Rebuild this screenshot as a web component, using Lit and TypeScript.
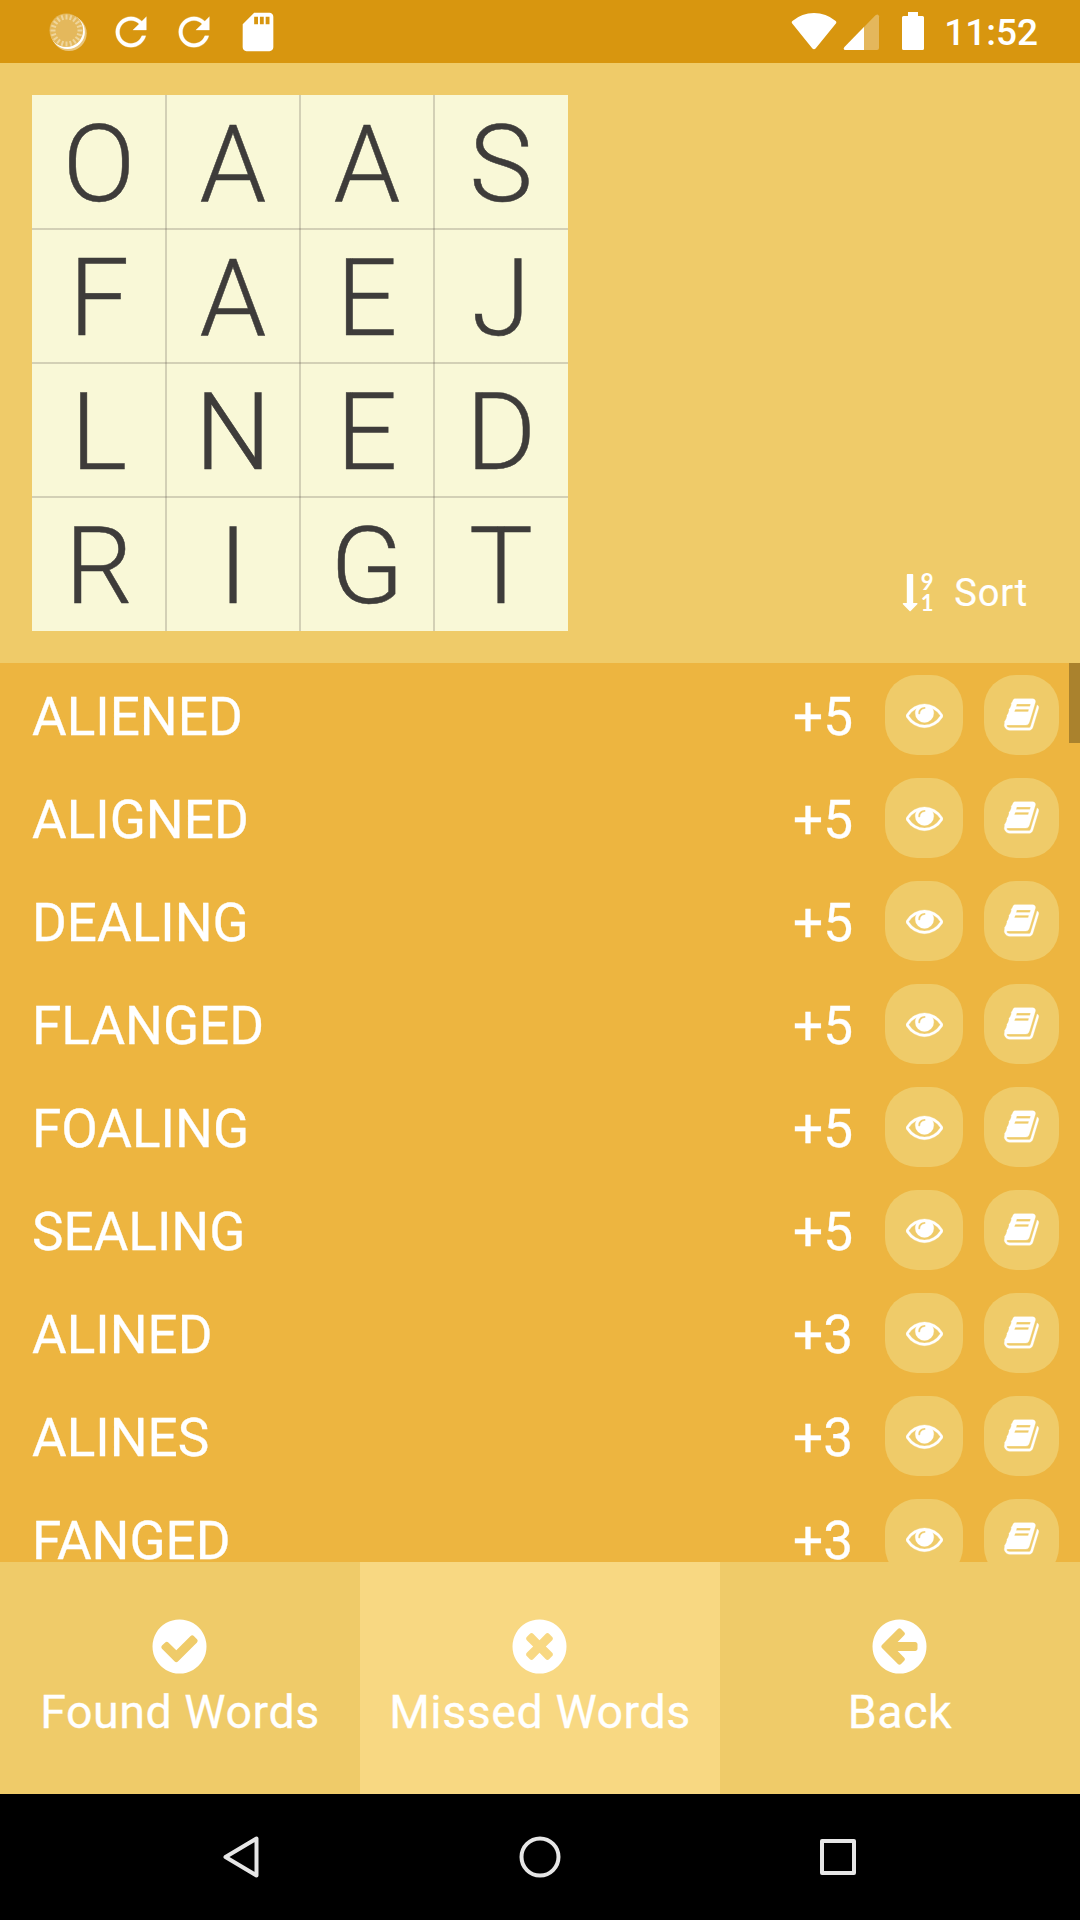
import { LitElement, html, svg, css } from "lit";
import { customElement, property } from "lit/decorators.js";

const LETTERS = "OAASFAEJLNEDRIGT".split("");

const WORDS: Array<[string, number]> = [
  ["ALIENED", 5],
  ["ALIGNED", 5],
  ["DEALING", 5],
  ["FLANGED", 5],
  ["FOALING", 5],
  ["SEALING", 5],
  ["ALINED", 3],
  ["ALINES", 3],
  ["FANGED", 3],
];

const DISC =
  "q0 209-103 385.5t-279.5 279.5-385.5 103-385.5-103-279.5-279.5-103-385.5 103-385.5 279.5-279.5 385.5-103 385.5 103 279.5 279.5 103 385.5z";

const GLYPHS: Record<string, string> = {
  check:
    "M1412 734q0-28-18-46l-91-90q-19-19-45-19t-45 19l-408 407-226-226q-19-19-45-19t-45 19l-91 90q-18 18-18 46 0 27 18 45l362 362q19 19 45 19 27 0 46-19l543-543q18-18 18-45zm252 162" + DISC,
  cross:
    "M1277 1122q0-26-19-45l-181-181 181-181q19-19 19-45 0-27-19-46l-90-90q-19-19-46-19-26 0-45 19l-181 181-181-181q-19-19-45-19-27 0-46 19l-90 90q-19 19-19 46 0 26 19 45l181 181-181 181q-19 19-19 45 0 27 19 46l90 90q19 19 46 19 26 0 45-19l181-181 181 181q19 19 45 19 27 0 46-19l90-90q19-19 19-46zm387-226" + DISC,
  back:
    "M1408 960v-128q0-26-19-45t-45-19h-502l189-189q19-19 19-45t-19-45l-91-91q-18-18-45-18t-45 18l-362 362-91 91q-18 18-18 45t18 45l91 91 362 362q18 18 45 18t45-18l91-91q18-18 18-45t-18-45l-189-189h502q26 0 45-19t19-45zm256-64" + DISC,
  eye:
    "M1664 960q-152-236-381-353 61 104 61 225 0 185-131.5 316.5t-316.5 131.5-316.5-131.5-131.5-316.5q0-121 61-225-229 117-381 353 133 205 333.5 326.5t434.5 121.5 434.5-121.5 333.5-326.5zm-720-384q0-20-14-34t-34-14q-125 0-214.5 89.5t-89.5 214.5q0 20 14 34t34 14 34-14 14-34q0-86 61-147t147-61q20 0 34-14t14-34zm848 384q0 34-20 69-140 230-376.5 368.5t-499.5 138.5-499.5-139-376.5-368q-20-35-20-69t20-69q140-229 376.5-368t499.5-139 499.5 139 376.5 368q20 35 20 69z",
  book:
    "M1703 478q40 57 18 129l-275 906q-19 64-76.5 107.5t-122.5 43.5h-923q-77 0-148.5-53.5t-99.5-131.5q-24-67-2-127 0-4 3-27t4-37q1-8-3-21.5t-3-19.5q2-11 8-21t16.5-23.5 16.5-23.5q23-38 45-91.5t30-91.5q3-10 .5-30t-.5-28q3-11 17-28t17-23q21-36 42-92t25-90q1-9-2.5-32t.5-28q4-13 22-30.5t22-22.5q19-26 42.5-84.5t27.5-96.5q1-8-3-25.5t-2-26.5q2-8 9-18t18-23 17-21q8-12 16.5-30.5t15-35 16-36 19.5-32 26.5-23.5 36-11.5 47.5 5.5l-1 3q38-9 51-9h761q74 0 114 56t18 130l-274 906q-36 119-71.5 153.5t-128.5 34.5h-869q-27 0-38 15-11 16-1 43 24 70 144 70h923q29 0 56-15.5t35-41.5l300-987q7-22 5-57 38 15 59 43zm-1064 2q-4 13 2 22.5t20 9.5h608q13 0 25.5-9.5t16.5-22.5l21-64q4-13-2-22.5t-20-9.5h-608q-13 0-25.5 9.5t-16.5 22.5zm-83 256q-4 13 2 22.5t20 9.5h608q13 0 25.5-9.5t16.5-22.5l21-64q4-13-2-22.5t-20-9.5h-608q-13 0-25.5 9.5t-16.5 22.5z",
};

const glyph = (name: string, cls: string) => html`
  <svg class=${cls} viewBox="0 0 1792 1792" fill="currentColor"><path d=${GLYPHS[name]} /></svg>
`;

@customElement("status-bar")
export class StatusBar extends LitElement {
  static styles = css`
    :host {
      display: flex;
      align-items: center;
      justify-content: space-between;
      box-sizing: border-box;
      height: 63px;
      padding: 0 42px 0 45px;
      background: #d8960f;
      color: #fff;
    }
    .group { display: flex; align-items: center; }
    .notices { gap: 17.2px; }
    svg { display: block; flex: none; }
    .clock {
      font: 500 37px/62px Roboto, sans-serif;
      margin-left: 18px;
      padding-top: 2px;
    }
  `;

  render() {
    const refresh = html`<svg width="46" height="46" viewBox="0 0 24 24" fill="#fff" stroke="#fff" stroke-width=".15">
      <path d="M17.65 6.35C16.2 4.9 14.21 4 12 4c-4.42 0-7.99 3.58-7.99 8s3.57 8 7.99 8c3.73 0 6.84-2.55 7.73-6h-2.08c-.82 2.33-3.04 4-5.65 4-3.31 0-6-2.69-6-6s2.69-6 6-6c1.66 0 3.14.69 4.22 1.78L13 11h7V4l-2.35 2.35z" />
    </svg>`;
    const ticks = Array.from({ length: 20 }, (_, i) => svg`
      <line x1="21.5" y1="5.5" x2="21.5" y2="10.5" transform="rotate(${i * 18} 21.5 21.5)" />`);
    return html`
      <div class="group notices">
        <svg width="46" height="46" viewBox="0 0 46 46">
          <circle cx="24" cy="24.3" r="17.7" fill="#fff" opacity=".45" />
          <circle cx="22.7" cy="22.9" r="17.2" fill="#fff" />
          <circle cx="21.3" cy="21.3" r="16.8" fill="#e4b85c" />
          <g stroke="#efd59b" stroke-width="2">${ticks}</g>
        </svg>
        ${refresh} ${refresh}
        <svg width="46" height="46" viewBox="0 0 24 24" fill="#fff">
          <path d="M18 2h-8L4.02 8 4 20c0 1.1.9 2 2 2h12c1.1 0 2-.9 2-2V4c0-1.1-.9-2-2-2zm-6 6h-2V4h2v4zm3 0h-2V4h2v4zm3 0h-2V4h2v4z" />
        </svg>
      </div>
      <div class="group">
        <svg width="136" height="63" viewBox="790 0 136 63">
          <path d="M814 49.3q-1 0-1.8-1L792 23.2q-.9-1.3.4-2.3Q802 13 814 13t21.7 7.9q1.2 1 .4 2.3L815.8 48.3q-.8 1-1.8 1z" fill="#fff" />
          <path d="M845.5 50q-3-.3-1-3L875.5 15.3q3-1.8 3.5 1V48q0 2-2 2z" fill="#fff" opacity=".32" />
          <path d="M845.5 50q-3-.3-1-3L864 27.1V50z" fill="#fff" />
          <path d="M908 12h10v4h4.5q1.5 0 1.5 1.5v31q0 1.5-1.5 1.5h-19q-1.5 0-1.5-1.5v-31q0-1.5 1.5-1.5h4.5z" fill="#fff" />
        </svg>
        <span class="clock">11:52</span>
      </div>
    `;
  }
}

@customElement("letter-board")
export class LetterBoard extends LitElement {
  static styles = css`
    :host {
      display: grid;
      grid-template: repeat(4, 134px) / repeat(4, 134px);
      width: 536px;
      background:
        repeating-linear-gradient(to right, rgba(85, 75, 70, 0.23) 0 2px, #0000 2px 134px) 133px 0 / 270px 100% no-repeat,
        repeating-linear-gradient(to bottom, rgba(85, 75, 70, 0.23) 0 2px, #0000 2px 134px) 0 133px / 100% 270px no-repeat,
        #f9f8d7;
    }
    .cell {
      box-sizing: border-box;
      height: 134px;
      padding-top: 3px;
      text-align: center;
      font: 300 107px/134px Roboto, sans-serif;
      -webkit-text-stroke: 0.5px #3e3c3a;
      color: #3e3c3a;
    }
  `;

  render() {
    return LETTERS.map((l) => html`<div class="cell">${l}</div>`);
  }
}

@customElement("word-row")
export class WordRow extends LitElement {
  static styles = css`
    :host {
      display: flex;
      align-items: center;
      box-sizing: border-box;
      height: 103px;
      padding: 1px 21px 0 32px;
      color: #fff;
      font: 400 53.1px/100px Roboto, sans-serif;
    }
    .word, .score {
      padding-top: 3px;
      -webkit-text-stroke: 0.3px #fff;
    }
    .word { flex: 1; }
    .score { margin-right: 32px; }
    .action {
      display: flex;
      align-items: center;
      justify-content: center;
      box-sizing: border-box;
      height: 80px;
      border-radius: 32px;
      padding-bottom: 1px;
      background: #efcb69;
    }
    .look { width: 78px; margin-right: 21px; }
    .define { width: 75px; }
    .glyph { width: 37px; height: 37px; stroke: #fff; stroke-width: 14px; }
  `;

  @property() word = "";
  @property({ type: Number }) score = 0;

  render() {
    return html`
      <span class="word">${this.word}</span>
      <span class="score">+${this.score}</span>
      <span class="action look">${glyph("eye", "glyph")}</span>
      <span class="action define">${glyph("book", "glyph")}</span>
    `;
  }
}

@customElement("app-root")
export class AppRoot extends LitElement {
  static styles = css`
    :host {
      display: flex;
      flex-direction: column;
      width: 1080px;
      height: 1920px;
      overflow: hidden;
      font-family: Roboto, sans-serif;
      color: #fff;
      background: #000;
    }
    .header {
      display: flex;
      justify-content: space-between;
      align-items: flex-end;
      box-sizing: border-box;
      height: 600px;
      padding: 32px 52px 32px 32px;
      background: #efcb69;
    }
    .sort {
      display: flex;
      align-items: center;
      height: 76px;
      font-size: 38px;
      letter-spacing: 0.8px;
      -webkit-text-stroke: 0.2px #fff;
    }
    .sort-icon { width: 34px; height: 40px; margin-right: 18px; overflow: visible; }
    .digit {
      font: 700 22px/20px Lato, sans-serif;
      letter-spacing: 0;
      -webkit-text-stroke: 0.6px #fff;
    }
    .list {
      position: relative;
      height: 899px;
      overflow: hidden;
      background: #edb540;
    }
    .thumb {
      position: absolute;
      top: 0;
      right: 0;
      width: 11px;
      height: 80px;
      background: #aa822d;
    }
    .tabs {
      display: grid;
      grid-template-columns: repeat(3, 1fr);
      height: 232px;
      background: #efcb69;
    }
    .tab {
      display: flex;
      flex-direction: column;
      align-items: center;
      padding-top: 53px;
      font-size: 46.5px;
      line-height: 56px;
      letter-spacing: 0.55px;
      white-space: nowrap;
      -webkit-text-stroke: 0.3px #fff;
    }
    .tab.active { background: #f8d882; }
    .tab-icon { width: 63px; height: 63px; margin: 0 1px 6px 0; }
    .nav {
      display: flex;
      align-items: center;
      justify-content: space-between;
      height: 126px;
      padding: 0 218px 0 217px;
    }
    .nav svg { width: 48px; height: 48px; }
  `;

  render() {
    return html`
      <status-bar></status-bar>
      <div class="header">
        <letter-board></letter-board>
        <div class="sort">
          <svg class="sort-icon" viewBox="902 571 34 40" fill="#fff">
            <path d="M907.5 572h5q.7 0 .7.7V601h3.6q1.2.1.5 1.2l-6.6 6.8q-.6.5-1.2 0l-6.6-6.8q-.7-1 .5-1.2h3.4V572.7q0-.7.7-.7z" />
            <text class="digit" x="920.8" y="588">9</text>
            <text class="digit" x="920.8" y="609.2">1</text>
          </svg>
          <span>Sort</span>
        </div>
      </div>
      <div class="list">
        ${WORDS.map(([w, s]) => html`<word-row .word=${w} .score=${s}></word-row>`)}
        <div class="thumb"></div>
      </div>
      <div class="tabs">
        <div class="tab">${glyph("check", "tab-icon")}<span>Found Words</span></div>
        <div class="tab active">${glyph("cross", "tab-icon")}<span>Missed Words</span></div>
        <div class="tab">${glyph("back", "tab-icon")}<span>Back</span></div>
      </div>
      <div class="nav">
        <svg viewBox="0 0 48 48" fill="none" stroke="#e6e6e6" stroke-width="4" stroke-linejoin="round">
          <path d="M39.5 5.5v37L8.5 24z" />
        </svg>
        <svg viewBox="0 0 48 48" fill="none" stroke="#e6e6e6" stroke-width="4">
          <circle cx="24" cy="24" r="18.5" />
        </svg>
        <svg viewBox="0 0 48 48" fill="none" stroke="#e6e6e6" stroke-width="4" stroke-linejoin="round">
          <rect x="8" y="8" width="32" height="32" />
        </svg>
      </div>
    `;
  }
}
